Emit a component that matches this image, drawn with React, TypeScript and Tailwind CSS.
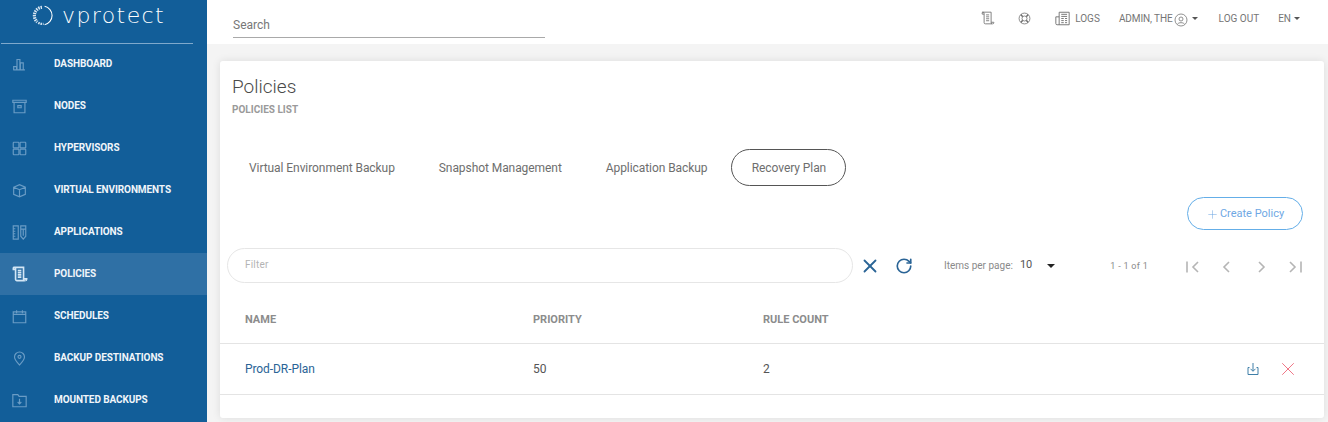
import { Plus, RotateCw, X } from "lucide-react"
import type { ReactNode } from "react"

const iconProps = {
  width: 15,
  height: 15,
  viewBox: "0 0 18 18",
  fill: "none",
  stroke: "currentColor",
  strokeWidth: 1.4,
}

const ScrollIcon = ({ className = "" }: { className?: string }) => (
  <svg {...iconProps} className={className}>
    <path d="M1.5 1.5h11.5v13.500a1.500 1.500 0 0 0 1.500 1.500H5.500A1.500 1.500 0 0 1 4 15V3a1.500 1.500 0 0 0-1.500-1.500 1 1 0 0 0-1 1v1.500H4" />
    <path d="M13 14.500h3.500V15a1.500 1.500 0 0 1-1.500 1.500M6.500 5h4M6.500 7.500h4M6.500 10h4M6.500 12.500h4" />
  </svg>
)

const menu: { label: string; icon: ReactNode; active?: boolean }[] = [
  {
    label: "DASHBOARD",
    icon: (
      <svg {...iconProps}>
        <path d="M2 15.500v-4h3.500v4M6 15.500V3h3.500v12.500M10 15.500V7h3.500v8.500M1.500 15.500h14" />
      </svg>
    ),
  },
  {
    label: "NODES",
    icon: (
      <svg {...iconProps}>
        <path d="M1 1.500h16v2.500H1zM2.500 4v12.500h13V4M7 8h4v2.500H7z" />
      </svg>
    ),
  },
  {
    label: "HYPERVISORS",
    icon: (
      <svg {...iconProps}>
        <rect x="1.500" y="1.500" width="6.800" height="6.800" rx="0.800" />
        <rect x="9.700" y="1.500" width="6.800" height="6.800" rx="0.800" />
        <rect x="1.500" y="9.700" width="6.800" height="6.800" rx="0.800" />
        <rect x="9.700" y="9.700" width="6.800" height="6.800" rx="0.800" />
      </svg>
    ),
  },
  {
    label: "VIRTUAL ENVIRONMENTS",
    icon: (
      <svg {...iconProps}>
        <path d="M2 5 9 2l7 3v8.500L9 16.500l-7-3zM2 5l7 3 7-3M9 8v8.500" />
      </svg>
    ),
  },
  {
    label: "APPLICATIONS",
    icon: (
      <svg {...iconProps}>
        <path d="M1.500 1h6v16h-6zM1.500 4.500H4M1.500 7.500H4M1.500 10.500H4M1.500 13.500H4M10.500 1h6v12.500l-3 3.500-3-3.500zM10.500 5h6M13.500 5v8" />
      </svg>
    ),
  },
  {
    label: "POLICIES",
    active: true,
    icon: <ScrollIcon className="text-[#d3e6f5] w-[16px] h-[16px] stroke-[1.8]" />,
  },
  {
    label: "SCHEDULES",
    icon: (
      <svg {...iconProps}>
        <path d="M1.500 3.500h15v13h-15zM1.500 6.500h15M5.500 1.500v3.500M12.500 1.500v3.500" />
      </svg>
    ),
  },
  {
    label: "BACKUP DESTINATIONS",
    icon: (
      <svg {...iconProps}>
        <path d="M9 16.800C6 13.500 3 10.500 3 7.200a6 6 0 0 1 12 0c0 3.300-3 6.300-6 9.600z" />
        <circle cx="9" cy="7" r="1.800" />
      </svg>
    ),
  },
  {
    label: "MOUNTED BACKUPS",
    icon: (
      <svg {...iconProps}>
        <path d="M1 2h6l1.500 2H17v12.500H1zM9 7v6M6.800 10.800 9 13l2.200-2.200" />
      </svg>
    ),
  },
]

function Sidebar() {
  return (
    <aside className="w-[207px] shrink-0 h-full bg-[#125e99] overflow-hidden">
      <div className="h-[44px] -mb-px w-[192px] ml-px border-b border-[#7fa9cc] flex items-start pl-[31px] pt-[5px] gap-[9px]">
        <svg width="21" height="21" viewBox="0 0 20 20" fill="none">
          <path d="M12 1.200a9 9 0 0 1 0 17.600" stroke="#ffffff" strokeWidth="1" />
          <path d="M9.500 2.200a8 8 0 0 0-4.500 14" stroke="#d8e6f2" strokeWidth="3" strokeDasharray="1.400 0.800" />
          <path d="M6 17a8 8 0 0 0 5 1" stroke="#d8e6f2" strokeWidth="2.200" strokeDasharray="1.400 0.800" />
        </svg>
        <span className="text-[22px] leading-[22px] font-extralight tracking-[1.4px] text-white font-['DejaVu_Sans',sans-serif]">
          vprotect
        </span>
      </div>
      {menu.map((item) => (
        <div
          key={item.label}
          className={`h-[42px] flex items-center pl-[12px] ${item.active ? "bg-[#2f70a5]" : ""}`}
        >
          <span className={`w-[42px] shrink-0 flex ${item.active ? "" : "text-[#6a9cc5]"}`}>{item.icon}</span>
          <span className="pb-[2px] text-[10px] font-bold text-[#f0f5fa] tracking-[-0.1px] whitespace-nowrap">
            {item.label}
          </span>
        </div>
      ))}
    </aside>
  )
}

function Header() {
  return (
    <header className="h-[44px] shrink-0 bg-white flex items-start justify-between pl-[26px] pr-[28px]">
      <div className="w-[312px] h-[38px] border-b border-[#a9a9a9] flex items-end pb-[3px] text-[12px] text-[#777777]">
        Search
      </div>
      <div className="flex items-center h-[36px] text-[10px] text-[#757575]">
        <ScrollIcon className="text-[#707070] w-[14px] h-[14px] stroke-[1.1]" />
        <svg {...iconProps} strokeWidth={1.1} className="ml-[23px] w-[13px] h-[13px] text-[#707070]">
          <circle cx="9" cy="9" r="7.500" />
          <circle cx="9" cy="9" r="3.500" />
          <path d="m4 3.500 2.500 3M14 3.500l-2.500 3M4 14.500l2.500-3M14 14.500l-2.500-3" strokeWidth="2" />
        </svg>
        <svg {...iconProps} strokeWidth={1.1} className="ml-[24px] w-[15px] h-[15px] text-[#707070]">
          <path d="M5 16.500V1.500h12v15H2.500a1.500 1.500 0 0 1-1.500-1.500V7h4M7.500 4h7M7.500 6.500h7M7.500 9h3M12 9h2.500M7.500 11.500h3M12 11.500h2.500M7.500 14h3M12 14h2.500" />
        </svg>
        <span className="ml-[5px]">LOGS</span>
        <span className="ml-[19px] tracking-[-0.1px]">ADMIN, THE</span>
        <svg width="14" height="14" viewBox="0 0 14 14" fill="none" stroke="currentColor" className="ml-[1px] mt-[3px]">
          <circle cx="7" cy="7" r="6" strokeWidth="0.800" />
          <circle cx="7" cy="6" r="2" strokeWidth="0.800" />
          <path d="M3.500 11c1-1 2-1.300 3.500-1.300s2.500.3 3.500 1.300" strokeWidth="0.800" />
        </svg>
        <span className="ml-[4px] w-0 h-0 border-x-[3px] border-x-transparent border-t-[3px] border-t-[#555555]" />
        <span className="ml-[21px]">LOG OUT</span>
        <span className="ml-[19px]">EN</span>
        <span className="ml-[3px] w-0 h-0 border-x-[3px] border-x-transparent border-t-[3px] border-t-[#555555]" />
      </div>
    </header>
  )
}

function Tabs() {
  return (
    <div className="flex items-center h-[37px] mt-[33px] ml-[12px] text-[12px] text-[#6e6e6e] tracking-[-0.07px]">
      <span className="px-[17px]">Virtual Environment Backup</span>
      <span className="ml-[10px] px-[17px]">Snapshot Management</span>
      <span className="ml-[10px] px-[17px]">Application Backup</span>
      <span className="ml-[7px] h-[37px] w-[115px] flex items-center justify-center rounded-full border border-[#555555]">
        Recovery Plan
      </span>
    </div>
  )
}

function Toolbar() {
  return (
    <div className="flex items-center h-[35px] mt-[18px] ml-[7px]">
      <div className="w-[626px] h-[35px] rounded-full border border-[#e6e6e6] pl-[17px] pb-[2px] flex items-center text-[10px] text-[#b4b4b4] tracking-[0.2px]">
        Filter
      </div>
      <X size={22} strokeWidth={2} className="ml-[6px] text-[#2a6496]" />
      <RotateCw size={18} strokeWidth={2.2} className="ml-[14px] text-[#2a6496]" />
      <span className="ml-[31px] text-[10px] text-[#8a8a8a]">Items per page:</span>
      <span className="ml-[7px] text-[11px] text-[#555555]">10</span>
      <span className="ml-[15px] w-0 h-0 border-x-[4px] border-x-transparent border-t-[4px] border-t-[#222222]" />
      <span className="ml-[55px] mt-[2px] text-[9px] text-[#8a8a8a] tracking-[0.3px]">1 - 1 of 1</span>
      <div className="ml-[36px] flex items-center gap-[16px] text-[#b5b5b5] mt-[2px]">
        {[
          "M3 3.500v11M14 4 9 9l5 5",
          "M11 4 6 9l5 5",
          "m7 4 5 5-5 5",
          "m4 4 5 5-5 5M15 3.500v11",
        ].map((d) => (
          <svg key={d} width="18" height="18" viewBox="0 0 18 18" fill="none" stroke="currentColor" strokeWidth="1.600">
            <path d={d} />
          </svg>
        ))}
      </div>
    </div>
  )
}

function PolicyTable() {
  return (
    <div className="mt-[19px]">
      <div className="h-[42px] flex items-center pl-[25px] pb-[4px] text-[11px] font-bold text-[#8c8c8c] border-b border-[#e4e4e4]">
        <span className="w-[288px]">NAME</span>
        <span className="w-[230px]">PRIORITY</span>
        <span>RULE COUNT</span>
      </div>
      <div className="h-[51px] flex items-center pl-[25px] pr-[25px] text-[12px] text-[#555555] border-b border-[#e4e4e4]">
        <span className="w-[288px] text-[#2a6496] tracking-[-0.08px]">Prod-DR-Plan</span>
        <span className="w-[230px]">50</span>
        <span>2</span>
        <svg width="14" height="14" viewBox="0 0 14 14" fill="none" stroke="#3f7fa8" className="ml-auto">
          <path d="M3.500 5.500H2v7h10v-7h-1.500M7 1v8M4.500 6.800 7 9.300l2.500-2.500" />
        </svg>
        <X size={22} strokeWidth={1} className="ml-[17px] text-[#ee6a7c]" />
      </div>
    </div>
  )
}

export default function App() {
  return (
    <div className="w-[1328px] h-[422px] flex overflow-hidden bg-[#f4f4f4] font-['Roboto',sans-serif]">
      <Sidebar />
      <div className="flex-1 flex flex-col min-w-0">
        <Header />
        <main className="flex-1 pt-[17px] pl-[13px] pr-[4px] pb-[4px] min-h-0">
          <section className="h-full bg-white rounded-[3px] shadow-[0_0_8px_rgba(0,0,0,0.1)]">
            <div className="pl-[12px] pt-[14px]">
              <h1 className="text-[19px] leading-[24px] font-light text-[#4a4a4a]">Policies</h1>
              <p className="mt-[5px] text-[10px] leading-[12px] font-bold text-[#9a9a9a]">POLICIES LIST</p>
            </div>
            <Tabs />
            <div className="flex justify-end mt-[11px] pr-[21px]">
              <button className="w-[116px] h-[33px] pt-px rounded-full border border-[#64aee8] text-[11px] text-[#6fa8e4] flex items-center justify-center gap-[1px]">
                <Plus size={13} strokeWidth={1} /> Create Policy
              </button>
            </div>
            <Toolbar />
            <PolicyTable />
          </section>
        </main>
      </div>
    </div>
  )
}
